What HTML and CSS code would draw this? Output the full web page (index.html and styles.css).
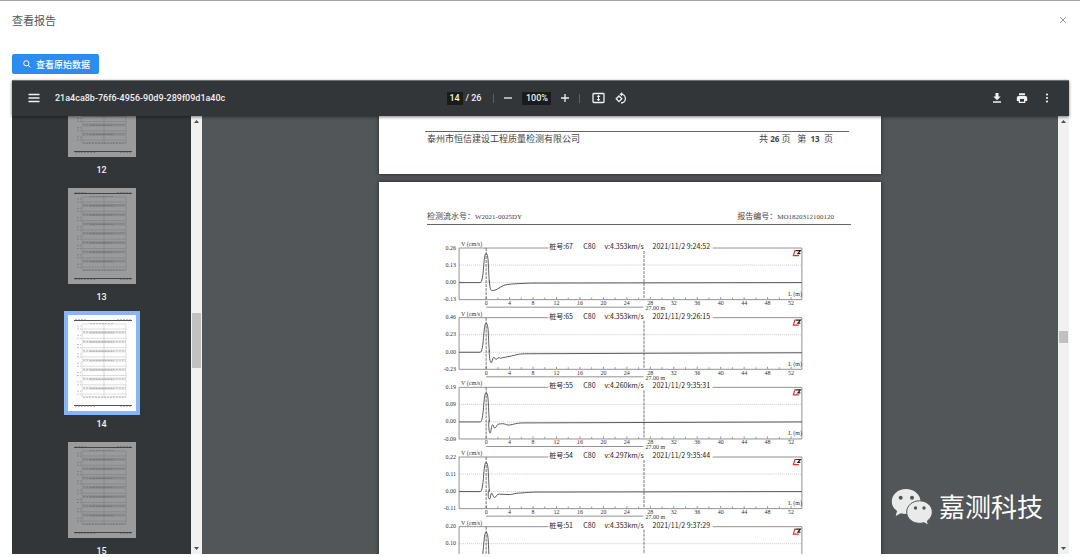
FILE: index.html
```html
<!DOCTYPE html>
<html lang="zh-CN">
  <head>
    <meta charset="UTF-8" />
    <meta name="viewport" content="width=device-width, initial-scale=1.0" />
    <title>查看报告</title>
    <link rel="stylesheet" href="styles.css">
  </head>
  <body>
    <header class="modal-header">
      <h1>查看报告</h1>
      <button class="close" aria-label="关闭">
        <svg width="8" height="8" viewBox="0 0 8 8"><path d="M1 1l6 6M7 1l-6 6" /></svg>
      </button>
    </header>

    <button class="raw-data">
      <svg width="8" height="8" viewBox="0 0 8 8"><circle cx="3.3" cy="3.3" r="2.6" /><path d="M5.2 5.2l2.3 2.3" /></svg>
      查看原始数据
    </button>

    <div class="viewer">
      <div class="toolbar">
        <div class="tools-start">
          <button class="icon" aria-label="菜单">
            <svg width="12" height="12" viewBox="0 0 12 12"><path class="line" d="M.5 2.500h11M.5 6h11M.5 9.500h11" /></svg>
          </button>
          <span class="file-name">21a4ca8b-76f6-4956-90d9-289f09d1a40c</span>
        </div>
        <div class="tools-center">
          <input class="page-no" type="text" value="14" aria-label="页码" />
          <span class="page-total">/ 26</span>
          <span class="divider"></span>
          <button class="icon" aria-label="缩小">
            <svg width="10" height="10" viewBox="0 0 10 10"><path class="line" d="M1 5h8" /></svg>
          </button>
          <input class="zoom" type="text" value="100%" aria-label="缩放" />
          <button class="icon" aria-label="放大">
            <svg width="10" height="10" viewBox="0 0 10 10"><path class="line" d="M1 5h8M5 1v8" /></svg>
          </button>
          <span class="divider"></span>
          <button class="icon fit" aria-label="适合页面">
            <svg width="13" height="12" viewBox="0 0 13 12"><rect class="line" x="1" y="1.5" width="11" height="9" rx="0.8" /><path class="fill" d="M6.500 2.800l1.900 2.200H7v2h1.400L6.500 9.200 4.600 7H6V5H4.600z" /></svg>
          </button>
          <button class="icon" aria-label="旋转">
            <svg width="13" height="13" viewBox="0 0 13 13"><path class="line" d="M6 2.200a4.400 4.400 0 1 1 0 8.800M4 4l2.800 2.800L4 9.600 1.200 6.800z" /><path class="fill" d="M7.200 0v4.600L4.600 2.300z" /></svg>
          </button>
        </div>
        <div class="tools-end">
          <button class="icon" aria-label="下载">
            <svg width="12" height="12" viewBox="0 0 12 12"><path class="fill" d="M4.500 1h3v3.500h2.200L6 8.200 2.300 4.500h2.200zM2 9.300h8v1.400H2z" /></svg>
          </button>
          <button class="icon" aria-label="打印">
            <svg width="12" height="12" viewBox="0 0 12 12"><path class="fill" fill-rule="evenodd" d="M3 1.300h6v2H3zM2.500 4h7A1.700 1.700 0 0 1 11.200 5.700V9H9.300v2H2.700V9H.8V5.700A1.700 1.700 0 0 1 2.500 4zM4 7v2.800h4V7z" /></svg>
          </button>
          <button class="icon" aria-label="更多">
            <svg width="12" height="12" viewBox="0 0 12 12"><circle class="fill" cx="6" cy="2.500" r="1.100" /><circle class="fill" cx="6" cy="6" r="1.100" /><circle class="fill" cx="6" cy="9.500" r="1.100" /></svg>
          </button>
        </div>
      </div>

      <div class="content">
        <nav class="sidebar">
          <ul class="thumbs" id="thumbs"></ul>
        </nav>
        <div class="scrollbar">
          <svg width="11" height="11" viewBox="0 0 11 11"><path d="M3 7l2.500-3L8 7z" /></svg>
          <div class="handle handle-side"></div>
          <svg width="11" height="11" viewBox="0 0 11 11"><path d="M3 4l2.500 3L8 4z" /></svg>
        </div>

        <main class="pages">
          <section class="page page-prev">
            <div class="page-footer">
              <span>泰州市恒信建设工程质量检测有限公司</span>
              <span class="count">共 <b>26</b> 页&nbsp;&nbsp; 第 <b>&nbsp;13&nbsp;</b> 页</span>
            </div>
          </section>
          <section class="page">
            <div class="page-header">
              <span>检测流水号：<span class="code">W2021-0025DY</span></span>
              <span>报告编号：<span class="code">MO1820312100120</span></span>
            </div>
            <svg class="charts" id="charts" viewBox="0 0 423 560"></svg>
          </section>
        </main>
        <div class="scrollbar">
          <svg width="11" height="11" viewBox="0 0 11 11"><path d="M3 7l2.500-3L8 7z" /></svg>
          <div class="handle handle-main"></div>
          <svg width="11" height="11" viewBox="0 0 11 11"><path d="M3 4l2.500 3L8 4z" /></svg>
        </div>

        <div class="watermark">
          <svg width="42" height="38" viewBox="0 0 42 38">
            <path class="bubble" d="M15 0C7 0 .8 5.500.8 12.500c0 4 2 7.200 5.300 9.500L4.600 27l5.300-2.700c1.600.5 3.300.7 5.100.7 8 0 14.500-5.500 14.500-12.500S23 0 15 0z" />
            <path class="bubble front" d="M28.500 11.800c-7.300 0-12.800 5-12.800 11.200s5.500 11.300 12.800 11.300c1.600 0 3-.2 4.400-.6l4.700 2.500-1.300-4.200c3.200-2.200 5-5.300 5-9 0-6.200-5.600-11.200-12.800-11.200z" />
            <g class="eyes">
              <circle cx="9.700" cy="8.800" r="2" /><circle cx="21" cy="8.800" r="2" />
              <circle cx="24.500" cy="19" r="1.700" /><circle cx="33" cy="19" r="1.700" />
            </g>
          </svg>
          <span>嘉测科技</span>
        </div>
      </div>
    </div>

    <script src="script.js"></script>
  </body>
</html>
```

FILE: styles.css
```css
* {
  box-sizing: border-box;
}
body {
  display: flex;
  flex-direction: column;
  height: 100vh;
  margin: 0;
  padding: 0 11px 3px 12px;
  border-top: 1px solid #a3a3a3;
  background: #fff;
  font-family: Roboto, "Noto Sans CJK SC", sans-serif;
  overflow: hidden;
}
button {
  padding: 0;
  border: none;
  background: none;
  font-family: inherit;
  cursor: pointer;
}
svg {
  display: block;
}
.modal-header {
  display: flex;
  justify-content: space-between;
  align-items: center;
  height: 38px;
}
.modal-header h1 {
  margin: 0;
  font-size: 11px;
  font-weight: 400;
  color: #555;
}
.close {
  padding: 1px 2px;
}
.close svg {
  fill: none;
  stroke: #999;
}
.raw-data {
  display: flex;
  align-items: center;
  align-self: flex-start;
  gap: 5px;
  height: 20px;
  margin: 15px 0 6px;
  padding: 0 9px 0 11px;
  border-radius: 2px;
  background: #2d8cf0;
  color: #fff;
  font-size: 9px;
  font-weight: 500;
}
.raw-data svg {
  fill: none;
  stroke: #fff;
}

/* pdf viewer */
.viewer {
  display: flex;
  flex-direction: column;
  flex: 1;
  min-height: 0;
}
.toolbar {
  display: grid;
  grid-template-columns: 1fr auto 1fr;
  align-items: center;
  height: 36px;
  padding: 0 16px 1px;
  border-top: 1px solid #6b7174;
  background: #323639;
  color: #f1f1f1;
  font-size: 9px;
  font-weight: 500;
  box-shadow: 0 1px 3px rgba(0, 0, 0, 0.5);
  z-index: 1;
}
.tools-start,
.tools-center,
.tools-end {
  display: flex;
  align-items: center;
}
.tools-start {
  gap: 15px;
}
.tools-center {
  padding-right: 6px;
}
.tools-end {
  justify-content: flex-end;
  gap: 13px;
}
.icon .line {
  fill: none;
  stroke: #f1f1f1;
  stroke-width: 1.3;
}
.icon .fill {
  fill: #f1f1f1;
}
.toolbar input {
  height: 13px;
  padding: 0;
  border: none;
  background: #191b1c;
  color: #f1f1f1;
  font: inherit;
  text-align: center;
}
.page-no {
  width: 16px;
}
.page-total {
  margin-left: 3px;
}
.zoom {
  width: 29px;
  margin: 0 9px;
}
.divider {
  width: 1px;
  height: 9px;
  margin: 0 9px 0 12px;
  background: #5c6063;
}
.tools-center .icon + .divider {
  margin: 0 12px 0 9px;
}
.fit {
  margin-right: 10px;
}
.content {
  position: relative;
  display: flex;
  flex: 1;
  min-height: 0;
}
.sidebar {
  width: 179px;
  background: #323639;
  overflow: hidden;
}
.thumbs {
  display: flex;
  flex-direction: column;
  align-items: center;
  gap: 12px;
  margin: -55px 0 0;
  padding: 0;
  list-style: none;
  color: #f1f1f1;
  font-size: 9px;
  font-weight: 500;
  line-height: 12px;
  text-align: center;
}
.thumb {
  width: 68px;
  height: 96px;
  margin-bottom: 7px;
  background: #fff;
  opacity: 0.5;
}
.current .thumb {
  opacity: 1;
  box-shadow: 0 0 0 4px #8ab4f8;
}
.thumb path {
  fill: none;
  stroke: #bbb;
  stroke-width: 0.5;
}
.thumb .bar {
  stroke: #555;
  stroke-width: 1.2;
}
.thumb .dots {
  stroke: #888;
  stroke-dasharray: 2 1;
}
.scrollbar {
  position: relative;
  display: flex;
  flex-direction: column;
  justify-content: space-between;
  width: 11px;
  background: #f1f1f1;
}
.scrollbar path {
  fill: #505050;
}
.handle {
  position: absolute;
  left: 1px;
  right: 1px;
  background: #c1c1c1;
}
.handle-side {
  top: 45%;
  height: 55px;
}
.handle-main {
  top: 49%;
  height: 12px;
}
.pages {
  display: flex;
  flex-direction: column;
  align-items: center;
  flex: 1;
  gap: 8px;
  background: #525659;
  overflow: hidden;
}
.page {
  flex-shrink: 0;
  width: 502px;
  max-width: 100%;
  padding: 29px 30px 40px 48px;
  background: #fff;
  box-shadow: 0 0 4px rgba(0, 0, 0, 0.6);
  color: #444;
  font-size: 8px;
}
.page-prev {
  padding: 15px 32px 29px 46px;
  font-size: 9px;
}
.page-header,
.page-footer {
  display: flex;
  justify-content: space-between;
  line-height: 12px;
}
.page-header {
  padding: 0 17px 1px 0;
  border-bottom: 1px solid #666;
}
.page-footer {
  padding: 1px 16px 0 2px;
  border-top: 1px solid #666;
}
.count b {
  font-family: "Open Sans", sans-serif;
  font-size: 8px;
}
.code {
  font-family: "Liberation Serif", serif;
  font-size: 7px;
}
.charts {
  width: 100%;
  margin-top: 14px;
  font-family: "Liberation Serif", serif;
  font-size: 6px;
  fill: #333;
}
.charts path {
  fill: none;
  stroke: #777;
  stroke-width: 0.8;
}
.charts .grid {
  stroke: #bbb;
  stroke-dasharray: 1 1;
}
.charts .mark {
  stroke: #555;
  stroke-dasharray: 3 1;
}
.charts .wave {
  stroke: #333;
}
.charts .end {
  text-anchor: end;
}
.charts .mid {
  text-anchor: middle;
}
.charts .info {
  font-family: "Noto Sans CJK SC", sans-serif;
  font-size: 7px;
  fill: #222;
}
.charts .logo-red {
  stroke: #d33;
  stroke-width: 1.2;
}
.charts .logo-dark {
  stroke: #222;
  stroke-width: 1.2;
}
.watermark {
  position: absolute;
  right: 26px;
  bottom: 27px;
  display: flex;
  align-items: center;
  gap: 6px;
  color: #fff;
  font-size: 26px;
  line-height: 38px;
}
.bubble {
  fill: #e9ebea;
}
.front {
  stroke: #525659;
  stroke-width: 1;
}
.eyes {
  fill: #525659;
}
```

FILE: script.js
```js
const piles = [
  { no: 67, speed: "4.353", time: "9:24:52", axis: ["0.26", "0.13", "0.00", "-0.13"],
    tail: "C63 5 63 8 65 8C69 8 72 5 76 3S95 1 103 0.5L374 0" },
  { no: 65, speed: "4.353", time: "9:26:15", axis: ["0.46", "0.23", "0.00", "-0.23"],
    tail: "C62 4 63 10.500 64 10.500S65.500 5 66.500 5 67.500 7 69 7 70 5.500 71.500 5.500 73 6.500 75 5.500L83 4Q92 1.500 97 1.500L216 1 374 0.500" },
  { no: 55, speed: "4.260", time: "9:35:31", axis: ["0.19", "0.09", "0.00", "-0.09"],
    tail: "C61 4 62 11 63 11S64 3 65.500 3 66 6 67.500 6 70 2 72 2 75 1.500 77 2 80 3.500 83 3 90 1 95 1L374 0" },
  { no: 54, speed: "4.297", time: "9:35:44", axis: ["0.22", "0.11", "0.00", "-0.11"],
    tail: "C60 3 61.500 7.500 62.500 7.500S63.500 1.500 64.500 1.500 66 6 67.500 6 69 2.500 72 2.500 79 3 82 3 88 1.500 92 1.500L106 0.500 374 0" },
  { no: 51, speed: "4.353", time: "9:37:29", axis: ["0.20", "0.10", "0.00", "-0.10"],
    tail: "C61 4 62 10 63 10S66 5 70 4L95 1 374 0" },
];

const ROW = 69.5;
const ZERO = 59;
const STEP = 23.4; // 4 m

function drawChart(p, i) {
  let ticks = "";
  let labels = "";
  for (let n = 0; n <= 13; n++) {
    const x = ZERO + n * STEP;
    ticks += `M${x} 60v-2`;
    if (n < 13) ticks += `M${x + STEP / 2} 60v-1.500`;
    labels += `<text class="mid" x="${x}" y="66">${n * 4}</text>`;
  }
  const axis = p.axis
    .map((v, k) => `<text class="end" x="29" y="${10.5 + k * 17.2}">${v}</text>`)
    .join("");

  return `<g transform="translate(0 ${i * ROW})">
    <path class="grid" d="M32 26h342M32 43.500h342" />
    <path d="M121 9H32v51.500h342V9h-89${ticks}M59 68h157" />
    <path class="mark" d="M59 9v51M216.500 12v48" />
    <path class="wave" d="M32 43.500h21c4 0 3-29 6-29 3 0 2 23 3.500 29" />
    <path class="wave" transform="translate(0 43.500)" d="M62 -2${p.tail}" />
    ${axis}${labels}
    <text x="34" y="7">V (cm/s)</text>
    <text class="end" x="374" y="57">L (m)</text>
    <text x="218" y="71">27.00 m</text>
    <g class="info">
      <text x="122" y="10">桩号:${p.no}</text>
      <text x="156" y="10">C80</text>
      <text x="177" y="10">v:${p.speed}km/s</text>
      <text x="225" y="10">2021/11/2 ${p.time}</text>
    </g>
    <path class="logo-red" d="M369 11.500h-2l-1.500 5h5.500" />
    <path class="logo-dark" d="M368.500 11.500h4l-2.500 3h2.500" />
  </g>`;
}

function drawThumb(no) {
  let rows = "";
  let dots = "";
  for (let k = 0; k < 8; k++) {
    const y = 9 + k * 9.3;
    rows += `M14 ${y}h44v7.500H14zM14 ${y + 5}h44`;
    dots += `M22 ${y - 0.5}h24M9 ${y + 2}h4M9 ${y + 5}h4M15 ${y + 8.300}h43`;
  }
  return `<li class="${no === 14 ? "current" : ""}">
    <svg class="thumb" viewBox="0 0 68 96">
      <path d="${rows}M36 8v75" />
      <path class="dots" d="${dots}M7 4.500h12M49 4.500h14M7 91.500h20M52 91.500h11" />
      <path class="bar" d="M6 5.500h58M6 90.500h58" />
    </svg>${no}</li>`;
}

document.getElementById("charts").innerHTML = piles.map(drawChart).join("");
document.getElementById("thumbs").innerHTML = [12, 13, 14, 15].map(drawThumb).join("");
```
